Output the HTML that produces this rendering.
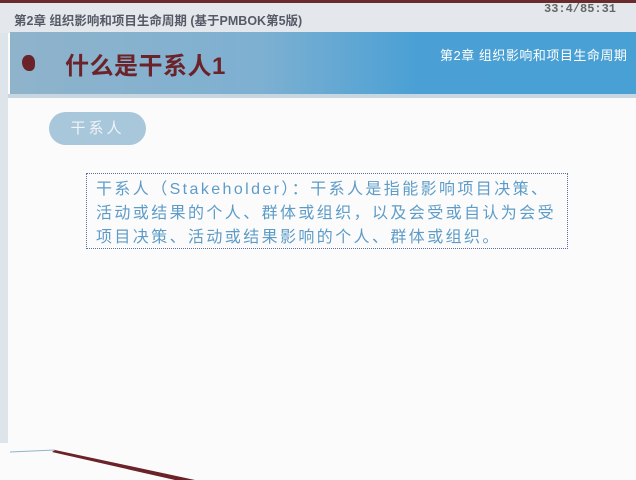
<!DOCTYPE html>
<html><head><meta charset="utf-8"><style>
body{margin:0;width:636px;height:480px;background:#fbfbfb;position:relative;overflow:hidden;font-family:"Liberation Sans","Noto Sans CJK SC",sans-serif}
.a{position:absolute}
</style></head><body>
<div class="a" style="left:0;top:0;width:636px;height:3px;background:#6b2a2e"></div>
<div class="a" style="left:0;top:3px;width:636px;height:30px;background:#e4e8ec"></div>
<div class="a" style="left:0;top:33px;width:8px;height:410px;background:#dde4ea"></div>
<div class="a" style="left:8px;top:94px;width:628px;height:4px;background:#c8d6e2"></div>
<div class="a" style="left:14px;top:10px;font-size:12.5px;color:#555a66;font-weight:bold;white-space:nowrap">第2章 组织影响和项目生命周期 (基于PMBOK第5版)</div>
<div class="a" style="left:544px;top:2px;font-size:12px;color:#666;font-family:'Liberation Mono',monospace;font-weight:bold">33:4/85:31</div>
<div class="a" style="left:10px;top:32px;width:626px;height:62px;background:linear-gradient(90deg,#8fb3cb 0%,#7eb0d2 40%,#4aa0d4 65%,#48a0d4 100%)"></div>
<div class="a" style="left:22px;top:55px;width:13px;height:16px;background:#6b2228;border-radius:50% 50% 40% 60%"></div>
<div class="a" style="left:65px;top:46px;font-size:24px;font-weight:bold;color:#6b2228;letter-spacing:0.5px">什么是干系人1</div>
<div class="a" style="left:440px;top:45px;font-size:13px;color:#fff;letter-spacing:0.5px;white-space:nowrap">第2章 组织影响和项目生命周期</div>
<div class="a" style="left:49px;top:112px;width:97px;height:33px;border-radius:17px;background:#a9c7db;color:#eef4f8;font-size:15px;line-height:33px;text-align:center;letter-spacing:3px">干系人</div>
<div class="a" style="left:86px;top:173px;width:480px;height:74px;border:1px dotted #5a6e9a"></div>
<div class="a" style="left:96px;top:178px;font-size:16px;color:#5e9cc8;line-height:24px;letter-spacing:2.4px;white-space:nowrap">干系人（Stakeholder）：干系人是指能影响项目决策、<br>活动或结果的个人、群体或组织，以及会受或自认为会受<br>项目决策、活动或结果影响的个人、群体或组织。</div>
<svg class="a" style="left:0;top:430px" width="260" height="50"><polygon points="55,20 195,50 175,50 52,22" fill="#6b2228"/><polyline points="10,22 55,20" stroke="#8fb3cb" fill="none"/></svg>
</body></html>
